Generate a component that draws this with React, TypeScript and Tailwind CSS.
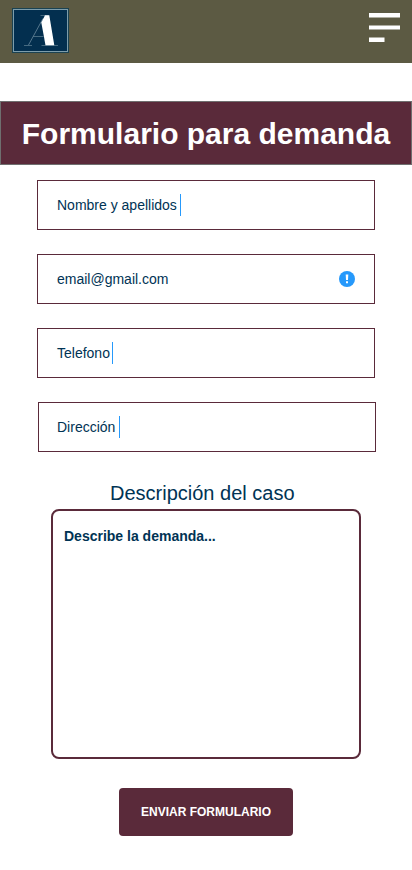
import React from "react";

function Logo() {
  return (
    <svg width="57" height="45" viewBox="0 0 57 45" aria-label="Logo">
      <rect width="57" height="45" fill="#1b4251" />
      <rect x="1.5" y="1.5" width="54" height="42" fill="#032f4f" stroke="#7d9dab" />
      <path d="M28.500 7.500h8M12 37.500h8M29.500 37.500H46M21 28.500h10.500" stroke="#466a80" fill="none" />
      <path d="M16.500 37L31 10.500" stroke="#5f7f94" strokeWidth="0.900" fill="none" />
      <path d="M33 7.300h4.300l5 30H33.500L29.300 14.500z" fill="#fff" />
    </svg>
  );
}

type FieldProps = { label: string; caret?: string; alert?: boolean; className?: string };

function Field({ label, caret, alert, className = "ml-[37px] pl-[19px]" }: FieldProps) {
  return (
    <div className={`flex h-[50px] w-[338px] items-center border border-[#5a2a3a] pr-[19px] text-sm text-[#003354] ${className}`}>
      <span>{label}</span>
      {caret && <span className={`h-[22px] w-px bg-[#2699fb] ${caret}`} />}
      {alert && (
        <svg className="ml-auto" width="16" height="16" viewBox="0 0 16 16">
          <circle cx="8" cy="8" r="8" fill="#2699fb" />
          <path d="M6.700 3.500h2.600l-.3 5.500H7zM7 10.300h2v2H7z" fill="#fff" />
        </svg>
      )}
    </div>
  );
}

export default function App() {
  return (
    <div className="h-[870px] w-[412px] overflow-hidden bg-white font-['Liberation_Sans',Arial,sans-serif]">
      <header className="flex h-[63px] items-start justify-between bg-[#5c5a43] pt-2 pr-3 pl-3">
        <Logo />
        <svg className="mt-[5px]" width="31" height="29" viewBox="0 0 31 29">
          <path d="M0 0h31v4.500H0zM0 12.400h31v4.200H0zM0 24.500h15.500v4.500H0z" fill="#fff" />
        </svg>
      </header>
      <h1 className="mt-[38px] flex h-16 items-center justify-center border border-[#6f6f6f] bg-[#5a2a3a] text-[30px] font-bold whitespace-nowrap text-white">
        Formulario para demanda
      </h1>
      <form className="mt-[15px] flex flex-col">
        <div className="flex flex-col gap-6">
          <Field label="Nombre y apellidos" caret="ml-[3px]" />
          <Field label="email@gmail.com" alert />
          <Field label="Telefono" caret="ml-[2px]" />
          <Field label="Dirección" caret="ml-[4px]" className="ml-[38px] pl-[18px]" />
        </div>
        <label className="mt-[27px] ml-[110px] h-[30px] text-xl leading-[28px] text-[#003354]">Descripción del caso</label>
        <div className="ml-[51px] h-[250px] w-[310px] rounded-lg border-2 border-[#5a2a3a] px-[11px] pt-[15px] text-sm font-bold text-[#003354]">
          Describe la demanda...
        </div>
        <button type="button" className="mt-[29px] ml-[119px] h-12 w-[174px] rounded bg-[#5a2a3a] text-xs font-bold text-white">
          ENVIAR FORMULARIO
        </button>
      </form>
    </div>
  );
}
